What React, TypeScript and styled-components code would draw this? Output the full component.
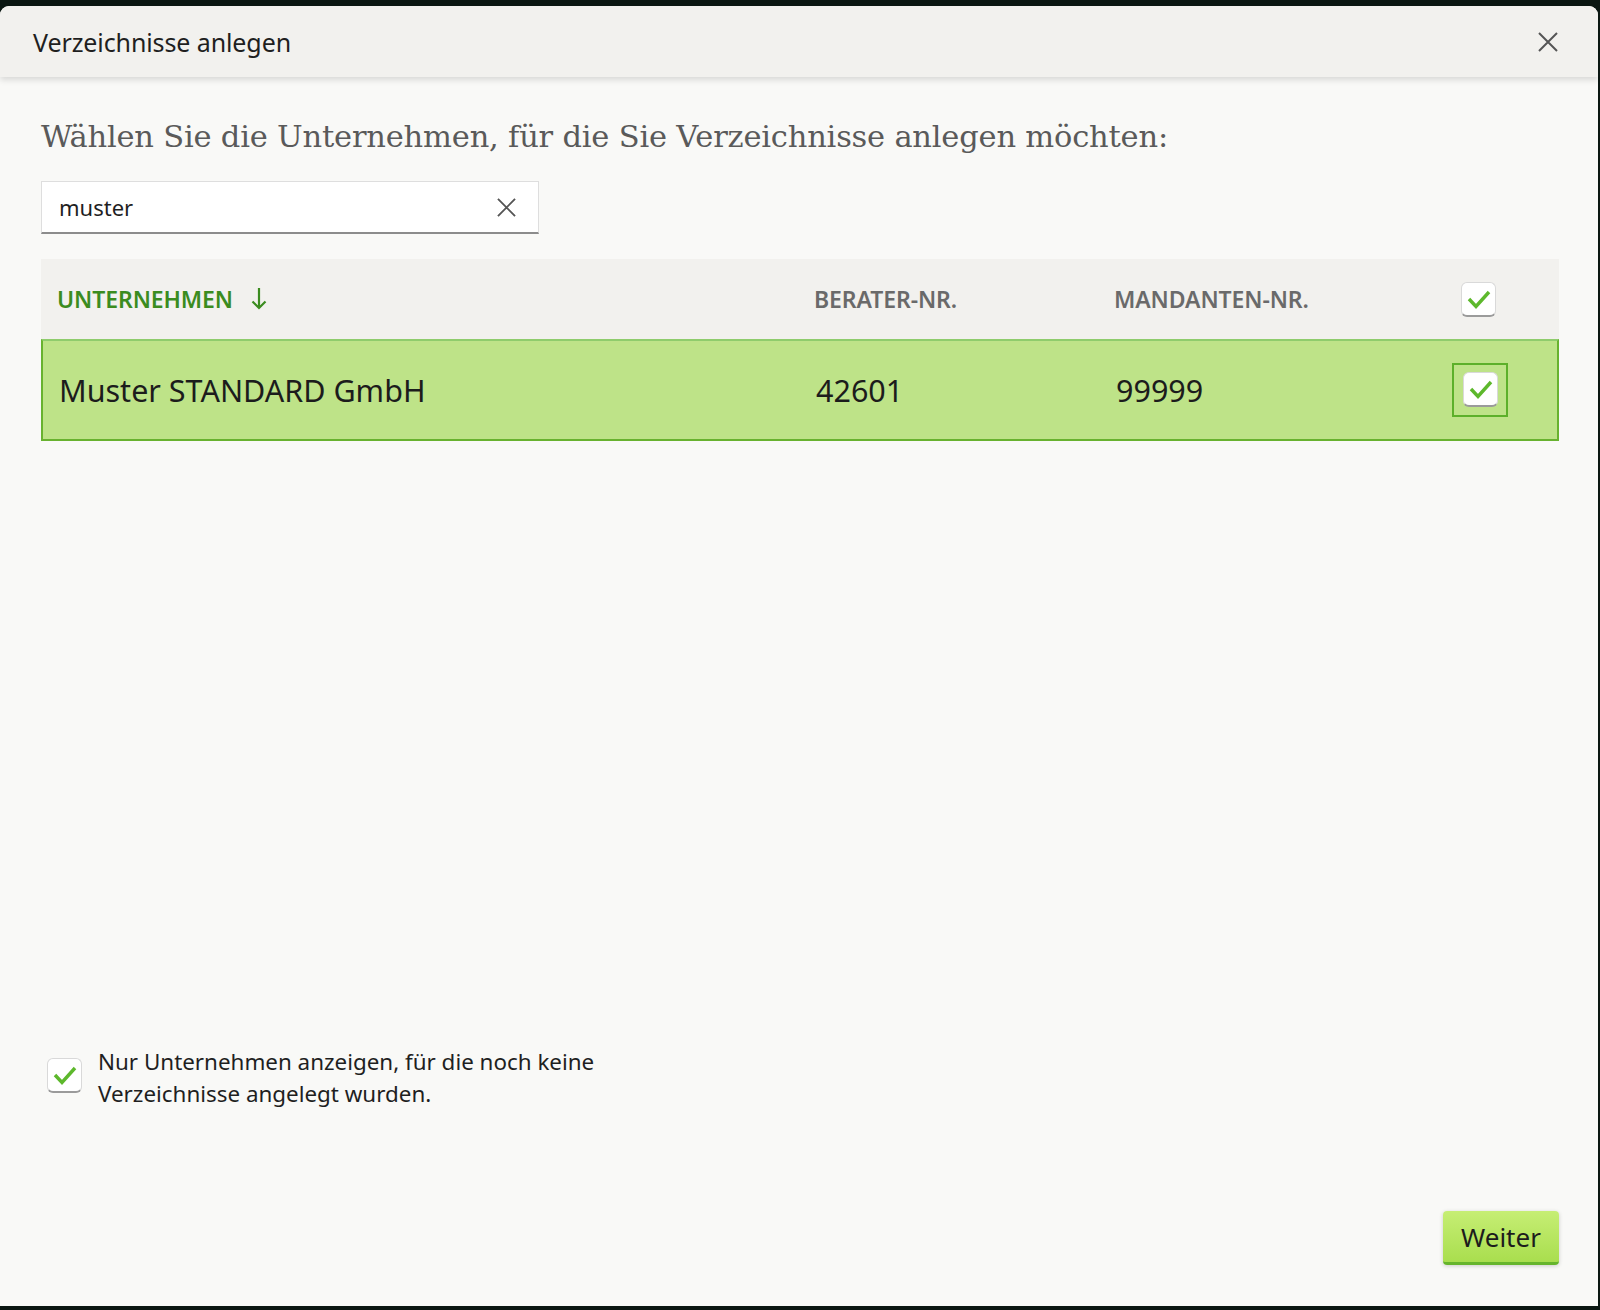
import React from "react";
import styled, { createGlobalStyle } from "styled-components";

const Global = createGlobalStyle`
  html, body { margin: 0; padding: 0; height: 100%; }
  body {
    background: #0b1712;
    font-family: "Noto Sans", "Open Sans", sans-serif;
    overflow: hidden;
  }
  #root { height: 100%; }
`;

const Screen = styled.div`
  height: 1310px;
  padding-top: 6px;
  padding-right: 2px;
  box-sizing: border-box;
`;

const Dialog = styled.div`
  width: 1598px;
  height: 1300px;
  background: #f9f9f7;
  border-radius: 9px 9px 0 0;
  display: flex;
  flex-direction: column;
  overflow: hidden;
`;

const Header = styled.div`
  height: 71px;
  flex: none;
  background: #f2f1ee;
  display: flex;
  align-items: center;
  justify-content: space-between;
  padding: 0 38px 0 33px;
  box-shadow: 0 3px 6px rgba(0, 0, 0, 0.13);
  position: relative;
  z-index: 1;
`;

const Title = styled.div`
  font-size: 25px;
  color: #1f1f1f;
  letter-spacing: -0.1px;
`;

const IconButton = styled.button`
  border: 0;
  background: transparent;
  padding: 0;
  width: 24px;
  height: 24px;
  display: flex;
  align-items: center;
  justify-content: center;
  cursor: pointer;
`;

const Body = styled.div`
  flex: 1;
  display: flex;
  flex-direction: column;
  padding: 42px 39px 41px 41px;
`;

const Heading = styled.h1`
  margin: 0;
  font-family: "DejaVu Serif", "Liberation Serif", serif;
  font-weight: normal;
  font-size: 30.5px;
  line-height: 36px;
  color: #5a5a5a;
  letter-spacing: -0.2px;
`;

const Search = styled.div`
  margin-top: 26px;
  width: 498px;
  height: 53px;
  box-sizing: border-box;
  background: #fff;
  border: 1px solid #dedede;
  border-bottom: 2px solid #8c8c8c;
  display: flex;
  align-items: center;
  padding: 0 22px 0 17px;
`;

const SearchInput = styled.input`
  flex: 1;
  border: 0;
  outline: none;
  background: transparent;
  font-family: inherit;
  font-size: 22px;
  color: #1f1f1f;
  padding: 0;
`;

const Table = styled.div`
  margin-top: 25px;
  display: flex;
  flex-direction: column;
`;

const HeadRow = styled.div`
  height: 80px;
  background: #f2f1ee;
  display: grid;
  grid-template-columns: 757px 300px 347px 1fr;
  align-items: center;
`;

const HeadCell = styled.div<{ $active?: boolean }>`
  padding-left: 16px;
  font-size: 23px;
  font-weight: 600;
  color: ${(p) => (p.$active ? "#3b8c1f" : "#6a6a6a")};
  display: flex;
  align-items: center;
  gap: 18px;
  letter-spacing: -0.1px;
`;

const DataRow = styled.div<{ $selected?: boolean }>`
  height: 102px;
  box-sizing: border-box;
  background: ${(p) => (p.$selected ? "#bee388" : "transparent")};
  border: 2px solid #68b22f;
  border-top: 2px solid #8fcc6c;
  display: grid;
  grid-template-columns: 757px 300px 347px 1fr;
  align-items: center;
`;

const Cell = styled.div`
  padding-left: 16px;
  font-size: 30.5px;
  color: #1c1c1c;
`;

const CheckCell = styled.div`
  padding-left: 16px;
  display: flex;
  align-items: center;
`;

const Focus = styled.div`
  padding: 7px 8px 8px 9px;
  border: 2px solid #5cb02a;
  margin-left: -11px;
  display: flex;
`;

const Box = styled.div`
  width: 35px;
  height: 35px;
  box-sizing: border-box;
  background: #fff;
  border: 1px solid #d9d9d9;
  border-bottom: 2px solid #9b9b9b;
  border-radius: 6px;
  display: flex;
  align-items: center;
  justify-content: center;
`;

const Spacer = styled.div`
  flex: 1;
`;

const Option = styled.label`
  display: flex;
  align-items: flex-start;
  gap: 16px;
  padding-left: 6px;
`;

const OptionBox = styled(Box)`
  margin-top: 12px;
`;

const OptionText = styled.div`
  font-size: 22.4px;
  line-height: 32px;
  color: #1f1f1f;
`;

const Actions = styled.div`
  margin-top: 101px;
  display: flex;
  justify-content: flex-end;
`;

const Primary = styled.button`
  width: 116px;
  height: 54px;
  border: 0;
  border-bottom: 3px solid #66b52c;
  border-radius: 4px;
  background: linear-gradient(#c6ee74, #a9de4e);
  box-shadow: 0 1px 4px rgba(0, 0, 0, 0.18);
  font-family: inherit;
  font-size: 26px;
  color: #1c1c1c;
  padding: 0;
  cursor: pointer;
`;

const Check = () => (
  <svg width="24" height="22" viewBox="0 0 24 22" fill="none">
    <polyline
      points="2,11 9,18.5 22,4"
      stroke="#5db82c"
      strokeWidth="3.4"
      strokeLinecap="butt"
      strokeLinejoin="miter"
    />
  </svg>
);

const Cross = ({ size, color }: { size: number; color: string }) => (
  <svg width={size} height={size} viewBox="0 0 20 20" fill="none">
    <path d="M1 1 L19 19 M19 1 L1 19" stroke={color} strokeWidth="2" />
  </svg>
);

const SortArrow = () => (
  <svg width="16" height="24" viewBox="0 0 16 24" fill="none">
    <path d="M8 1 V21 M1.5 14.5 L8 21 L14.5 14.5" stroke="#3b8c1f" strokeWidth="2.2" />
  </svg>
);

export default function App() {
  return (
    <>
      <Global />
      <Screen>
        <Dialog>
          <Header>
            <Title>Verzeichnisse anlegen</Title>
            <IconButton aria-label="Schließen">
              <Cross size={20} color="#555" />
            </IconButton>
          </Header>
          <Body>
            <Heading>Wählen Sie die Unternehmen, für die Sie Verzeichnisse anlegen möchten:</Heading>
            <Search>
              <SearchInput defaultValue="muster" />
              <Cross size={19} color="#555" />
            </Search>
            <Table>
              <HeadRow>
                <HeadCell $active>
                  UNTERNEHMEN
                  <SortArrow />
                </HeadCell>
                <HeadCell>BERATER-NR.</HeadCell>
                <HeadCell>MANDANTEN-NR.</HeadCell>
                <CheckCell>
                  <Box>
                    <Check />
                  </Box>
                </CheckCell>
              </HeadRow>
              <DataRow $selected>
                <Cell>Muster STANDARD GmbH</Cell>
                <Cell>42601</Cell>
                <Cell>99999</Cell>
                <CheckCell>
                  <Focus>
                    <Box>
                      <Check />
                    </Box>
                  </Focus>
                </CheckCell>
              </DataRow>
            </Table>
            <Spacer />
            <Option>
              <OptionBox>
                <Check />
              </OptionBox>
              <OptionText>
                Nur Unternehmen anzeigen, für die noch keine
                <br />
                Verzeichnisse angelegt wurden.
              </OptionText>
            </Option>
            <Actions>
              <Primary>Weiter</Primary>
            </Actions>
          </Body>
        </Dialog>
      </Screen>
    </>
  );
}
